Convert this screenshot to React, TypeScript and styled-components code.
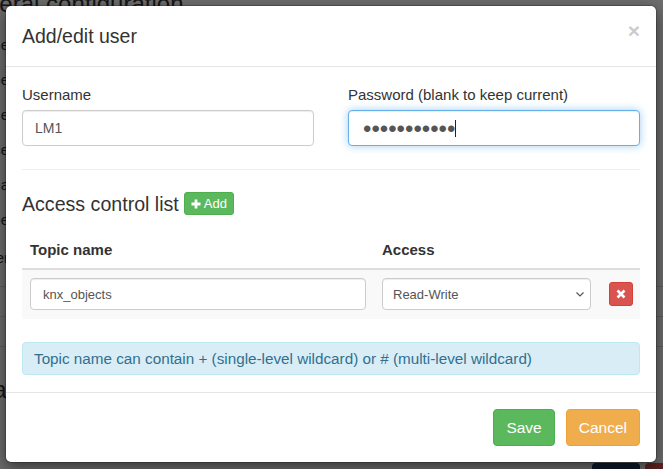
import React from "react";
import styled, { createGlobalStyle, css } from "styled-components";

const GlobalStyle = createGlobalStyle`
  html, body { margin: 0; padding: 0; }
  body {
    font-family: "Liberation Sans", Arial, sans-serif;
    color: #333;
    background: #fff;
  }
  * { box-sizing: border-box; }
`;

const Page = styled.div`
  position: relative;
  width: 663px;
  height: 469px;
  overflow: hidden;
  background: #fff;
  display: flex;
  flex-direction: column;
`;

/* ---------- page behind the dialog ---------- */

const BgTitle = styled.h3`
  margin: -9px 0 0 -46px;
  font-size: 24px;
  font-weight: 400;
  line-height: 1.1;
  white-space: nowrap;
`;

const BgForm = styled.div`
  display: flex;
  flex-direction: column;
  margin-top: 10px;
`;

const BgLabel = styled.div<{ $tall?: boolean }>`
  width: 120px;
  margin-left: -111px;
  text-align: right;
  font-size: 15px;
  line-height: ${(p) => (p.$tall ? "41px" : "35px")};
`;

const BgTable = styled.div`
  margin-top: 8px;
  display: flex;
  flex-direction: column;
`;

const BgRow = styled.div`
  height: 30px;
  border-top: 1px solid #ddd;
  font-size: 14px;
  line-height: 30px;
  margin-left: -40px;
`;

const BgHeading = styled.h3`
  margin: 0 0 0 -44px;
  font-size: 24px;
  font-weight: 400;
`;

const BgActions = styled.div`
  margin-top: auto;
  margin-bottom: -28px;
  margin-right: -30px;
  display: flex;
  justify-content: flex-end;
  gap: 5px;
`;

const BgButton = styled.div<{ $color: string }>`
  width: 48px;
  height: 34px;
  border-radius: 4px;
  background: ${(p) => p.$color};
`;

/* ---------- dialog ---------- */

const Overlay = styled.div`
  position: absolute;
  inset: 0;
  background: rgba(0, 0, 0, 0.57);
  padding: 5px 6px 0 5px;
`;

const Modal = styled.div`
  width: 652px;
  background: #fff;
  background-clip: padding-box;
  border: 1px solid rgba(0, 0, 0, 0.2);
  border-radius: 6px;
  box-shadow: 0 5px 15px rgba(0, 0, 0, 0.5);
`;

const Header = styled.div`
  display: flex;
  align-items: flex-start;
  justify-content: space-between;
  padding: 15px 16px;
  border-bottom: 1px solid #e5e5e5;
`;

const Title = styled.h4`
  margin: 0;
  font-size: 19.5px;
  font-weight: 400;
  line-height: 30px;
  color: #333;
`;

const Close = styled.button`
  border: 0;
  background: none;
  padding: 0;
  margin-top: -1px;
  font-family: "Liberation Sans", Arial, sans-serif;
  font-size: 21px;
  font-weight: 700;
  line-height: 1;
  color: #000;
  opacity: 0.2;
  text-shadow: 0 1px 0 #fff;
  cursor: pointer;
`;

const Body = styled.div`
  padding: 17px 16px 17px;
`;

const FieldGrid = styled.div`
  display: grid;
  grid-template-columns: 1fr 1fr;
  column-gap: 34px;
`;

const Label = styled.label`
  display: block;
  font-size: 15px;
  line-height: 21px;
  margin-bottom: 5px;
`;

const fieldBox = css<{ $focused?: boolean }>`
  width: 100%;
  height: 36px;
  font-family: "Liberation Sans", Arial, sans-serif;
  font-size: 14px;
  color: #555;
  background: #fff;
  border: 1px solid #ccc;
  border-radius: 4px;
  box-shadow: inset 0 1px 1px rgba(0, 0, 0, 0.075);
  outline: none;
  ${(p) =>
    p.$focused &&
    css`
      border-color: #66afe9;
      box-shadow: inset 0 1px 1px rgba(0, 0, 0, 0.075), 0 0 8px rgba(102, 175, 233, 0.6);
    `}
`;

const TextInput = styled.input<{ $focused?: boolean }>`
  ${fieldBox};
  display: block;
  padding: 0 12px;
`;

const PasswordField = styled.div<{ $focused?: boolean }>`
  ${fieldBox};
  display: flex;
  align-items: center;
  padding: 0 13px 0 14px;
`;

const Dots = styled.span`
  font-family: "Liberation Sans", Arial, sans-serif;
  font-size: 24px;
  line-height: 1;
  color: #555;
  letter-spacing: 0;
  margin-top: 1px;
`;

const Caret = styled.span`
  width: 1px;
  height: 17px;
  background: #222;
`;

const Divider = styled.hr`
  margin: 23px 0 22px;
  border: 0;
  border-top: 1px solid #eee;
`;

const SectionTitle = styled.div`
  display: flex;
  align-items: center;
  gap: 5px;
`;

const SectionHeading = styled.h3`
  margin: 0;
  font-size: 19.6px;
  font-weight: 400;
  line-height: 22px;
`;

const AddButton = styled.button`
  display: inline-flex;
  align-items: center;
  gap: 3px;
  height: 23px;
  padding: 0 6px;
  font-family: "Liberation Sans", Arial, sans-serif;
  font-size: 13px;
  color: #fff;
  background: #5cb85c;
  border: 1px solid #4cae4c;
  border-radius: 3px;
`;

const Table = styled.table`
  width: 100%;
  margin-top: 16px;
  border-collapse: collapse;
  table-layout: fixed;
`;

const Th = styled.th`
  padding: 8px;
  text-align: left;
  font-size: 15px;
  font-weight: 700;
  line-height: 21px;
  border-bottom: 2px solid #ddd;
`;

const Td = styled.td<{ $action?: boolean }>`
  padding: 8px 8px 9px ${(p) => (p.$action ? "10px" : "8px")};
  background: #f9f9f9;
  vertical-align: middle;
`;

const cellBox = css`
  display: block;
  width: 100%;
  height: 32px;
  font-family: "Liberation Sans", Arial, sans-serif;
  font-size: 13px;
  color: #555;
  background: #fff;
  border: 1px solid #ccc;
  border-radius: 4px;
  box-shadow: inset 0 1px 1px rgba(0, 0, 0, 0.075);
`;

const CellInput = styled.input`
  ${cellBox};
  padding: 0 12px;
`;

const SelectWrap = styled.div`
  position: relative;
`;

const CellSelect = styled.select`
  ${cellBox};
  appearance: none;
  padding: 0 10px;
`;

const Chevron = styled.svg`
  position: absolute;
  right: 7px;
  top: 14px;
  pointer-events: none;
`;

const RemoveButton = styled.button`
  display: flex;
  align-items: center;
  justify-content: center;
  width: 24px;
  height: 24px;
  padding: 0;
  background: #d9534f;
  border: 1px solid #d43f3a;
  border-radius: 3px;
`;

const Alert = styled.div`
  margin-top: 23px;
  padding: 5px 11px;
  font-size: 15.25px;
  line-height: 21px;
  color: #31708f;
  background: #d9edf7;
  border: 1px solid #bce8f1;
  border-radius: 4px;
`;

const Footer = styled.div`
  display: flex;
  justify-content: flex-end;
  gap: 11px;
  padding: 16px;
  border-top: 1px solid #e5e5e5;
`;

const Btn = styled.button<{ $bg: string; $border: string }>`
  height: 37px;
  padding: 0 12px;
  font-family: "Liberation Sans", Arial, sans-serif;
  font-size: 15.5px;
  color: #fff;
  background: ${(p) => p.$bg};
  border: 1px solid ${(p) => p.$border};
  border-radius: 4px;
`;

const PlusIcon = () => (
  <svg width="10" height="10" viewBox="0 0 10 10">
    <path d="M5 0.5v9M0.5 5h9" stroke="#fff" strokeWidth="2.8" />
  </svg>
);

const RemoveIcon = () => (
  <svg width="10" height="10" viewBox="0 0 10 10">
    <path d="M1.5 1.5l7 7M8.5 1.5l-7 7" stroke="#fff" strokeWidth="2.6" />
  </svg>
);

const bgLabels = ["Name", "Type", "Mode", "Device", "Area", "Scope", "Timer"];

export default function App() {
  return (
    <>
      <GlobalStyle />
      <Page>
        <BgTitle>General configuration</BgTitle>
        <BgForm>
          {bgLabels.map((l, i) => (
            <BgLabel key={l} $tall={i === 6}>
              {l}
            </BgLabel>
          ))}
        </BgForm>
        <BgTable>
          <BgRow>id</BgRow>
          <BgRow>id</BgRow>
          <BgRow />
        </BgTable>
        <BgHeading>Data</BgHeading>
        <BgActions>
          <BgButton $color="#1f3a5f" />
          <BgButton $color="#d9534f" />
        </BgActions>

        <Overlay>
          <Modal>
            <Header>
              <Title>Add/edit user</Title>
              <Close type="button">×</Close>
            </Header>
            <Body>
              <FieldGrid>
                <div>
                  <Label>Username</Label>
                  <TextInput type="text" defaultValue="LM1" />
                </div>
                <div>
                  <Label>Password (blank to keep current)</Label>
                  <PasswordField $focused>
                    <Dots>•••••••••••</Dots>
                    <Caret />
                  </PasswordField>
                </div>
              </FieldGrid>
              <Divider />
              <SectionTitle>
                <SectionHeading>Access control list</SectionHeading>
                <AddButton type="button">
                  <PlusIcon />
                  Add
                </AddButton>
              </SectionTitle>
              <Table>
                <colgroup>
                  <col style={{ width: 352 }} />
                  <col style={{ width: 225 }} />
                  <col />
                </colgroup>
                <thead>
                  <tr>
                    <Th>Topic name</Th>
                    <Th>Access</Th>
                    <Th />
                  </tr>
                </thead>
                <tbody>
                  <tr>
                    <Td>
                      <CellInput type="text" defaultValue="knx_objects" />
                    </Td>
                    <Td>
                      <SelectWrap>
                        <CellSelect defaultValue="rw">
                          <option value="r">Read</option>
                          <option value="w">Write</option>
                          <option value="rw">Read-Write</option>
                        </CellSelect>
                        <Chevron width="8" height="5" viewBox="0 0 8 5">
                          <path d="M0.5 0.5L4 4L7.5 0.5" fill="none" stroke="#555" strokeWidth="1.2" />
                        </Chevron>
                      </SelectWrap>
                    </Td>
                    <Td $action>
                      <RemoveButton type="button">
                        <RemoveIcon />
                      </RemoveButton>
                    </Td>
                  </tr>
                </tbody>
              </Table>
              <Alert>Topic name can contain + (single-level wildcard) or # (multi-level wildcard)</Alert>
            </Body>
            <Footer>
              <Btn type="button" $bg="#5cb85c" $border="#4cae4c">
                Save
              </Btn>
              <Btn type="button" $bg="#f0ad4e" $border="#eea236">
                Cancel
              </Btn>
            </Footer>
          </Modal>
        </Overlay>
      </Page>
    </>
  );
}
